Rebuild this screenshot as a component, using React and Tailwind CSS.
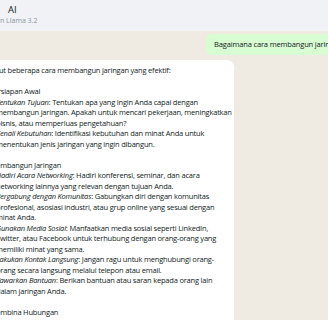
import React from "react";

const lines = [
  { text: "Berikut beberapa cara membangun jaringan yang efektif:" },
  { blank: true },
  { text: "1. Persiapan Awal" },
  { label: "Tentukan Tujuan", text: ": Tentukan apa yang ingin Anda capai dengan", item: true },
  { text: "membangun jaringan. Apakah untuk mencari pekerjaan, meningkatkan", item: true },
  { text: "bisnis, atau memperluas pengetahuan?", item: true },
  { label: "Kenali Kebutuhan", text: ": Identifikasi kebutuhan dan minat Anda untuk", item: true },
  { text: "menentukan jenis jaringan yang ingin dibangun.", item: true },
  { blank: true },
  { text: "2. Membangun Jaringan" },
  { label: "Hadiri Acara Networking", text: ": Hadiri konferensi, seminar, dan acara", item: true },
  { text: "networking lainnya yang relevan dengan tujuan Anda.", item: true },
  { label: "Bergabung dengan Komunitas", text: ": Gabungkan diri dengan komunitas", item: true },
  { text: "profesional, asosiasi industri, atau grup online yang sesuai dengan", item: true },
  { text: "minat Anda.", item: true },
  { label: "Gunakan Media Sosial", text: ": Manfaatkan media sosial seperti LinkedIn,", item: true },
  { text: "Twitter, atau Facebook untuk terhubung dengan orang-orang yang", item: true },
  { text: "memiliki minat yang sama.", item: true },
  { label: "Lakukan Kontak Langsung", text: ": Jangan ragu untuk menghubungi orang-", item: true },
  { text: "orang secara langsung melalui telepon atau email.", item: true },
  { label: "Tawarkan Bantuan", text: ": Berikan bantuan atau saran kepada orang lain", item: true },
  { text: "dalam jaringan Anda.", item: true },
  { blank: true },
  { text: "3. Membina Hubungan" },
  { label: "Jaga Komunikasi", text: ": Tetaplah berkomunikasi secara teratur", item: true },
];

const App = () => {
  return (
    <div className="w-[328px] h-[320px] overflow-hidden flex flex-col bg-[#efeae2] font-['Open_Sans',sans-serif] text-[#111b21]">
      {/* Header */}
      <header className="h-[31px] shrink-0 bg-[#f0f2f5] flex items-center">
        <div className="-ml-[51px] flex items-center gap-[8px] -mt-[2px]">
          <div className="w-[22px] h-[22px] rounded-full bg-[#00a884]" />
          <div className="flex flex-col leading-none">
            <span className="ml-[29px] text-[9.5px] whitespace-nowrap">AI</span>
            <span className="text-[7px] text-[#8696a0] whitespace-nowrap mt-[3px]">Dengan Llama 3.2</span>
          </div>
        </div>
      </header>

      {/* Chat */}
      <main className="flex-1 flex flex-col">
        <div className="mt-[3px] ml-[206px] w-max bg-[#d9fdd3] rounded-[6px] px-[8px] h-[21px] flex items-center text-[7.5px] tracking-[-0.15px] whitespace-nowrap">
          Bagaimana cara membangun jaringan yang efektif?
        </div>

        <div className="mt-[5px] -ml-[26px] w-[260px] bg-white rounded-[7px] pl-[8px] pt-[5px] text-[7.5px] tracking-[-0.2px] leading-[10.5px]">
          {lines.map((line, i) =>
            line.blank ? (
              <div key={i} className="h-[10.5px]" />
            ) : (
              <div key={i} className={`whitespace-nowrap ${line.item ? "pl-[14px]" : ""}`}>
                {line.label && <em>{line.label}</em>}
                {line.text}
              </div>
            )
          )}
        </div>
      </main>
    </div>
  );
};

export default App;
